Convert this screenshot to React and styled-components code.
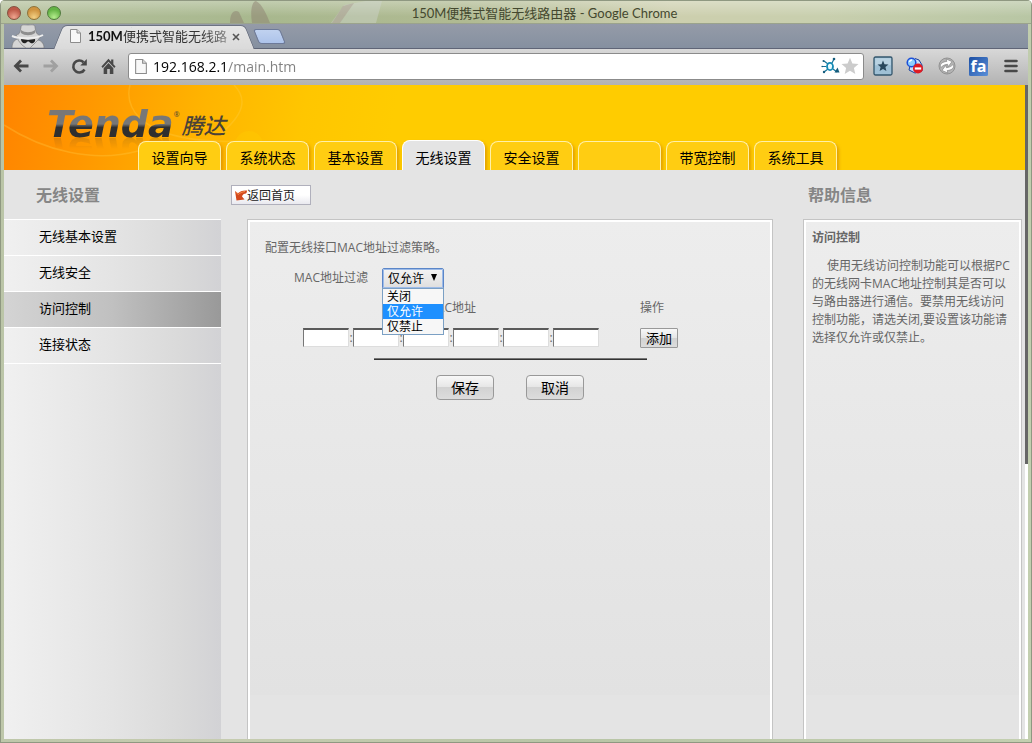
import React, { useState } from 'react';

import styled, { createGlobalStyle, css } from 'styled-components';

const GlobalStyle = createGlobalStyle`
  * {
    box-sizing: border-box;
  }
  body {
    margin: 0;
    background: #fff;
    font-family: "Open Sans", "Noto Sans CJK SC", sans-serif;
    font-size: 12px;
    line-height: 18px;
    color: #666;
  }
  button, input, select {
    font-family: inherit;
    margin: 0;
  }
`;

/* ---------- window frame ---------- */

const Window = styled.div`
  display: flex;
  flex-direction: column;
  min-height: 100vh;
  padding: 0 3px 3px;
  border: 1px solid #8f9881;
  border-top: 0;
  border-radius: 5px 5px 0 0;
  overflow: hidden;
  background: linear-gradient(100deg, #b9c4a6 0%, #c6ccb0 30%, #b8c5a6 60%, #c3cfb0 100%);
`;

const TitleBar = styled.div`
  position: relative;
  display: flex;
  align-items: center;
  height: 24px;
  margin: 0 -3px;
  padding: 2px 3px 0;
  border-top: 1px solid #8f9881;
  border-bottom: 1px solid #9ba38c;
  background:
    linear-gradient(rgba(255, 255, 255, 0.3), rgba(255, 255, 255, 0) 70%),
    linear-gradient(90deg, #b4c09c, #a8b88e 25%, #b0ba92 45%, #cdcfae 65%, #c8cfae 80%, #b8c6a4);
`;

const Ears = styled.svg`
  position: absolute;
  left: 225px;
  top: 0;
`;

const Lights = styled.div`
  display: flex;
  gap: 6px;
  padding-left: 3px;
`;

const Light = styled.button`
  width: 14px;
  height: 14px;
  padding: 0;
  border: 1px solid ${props => props.$edge};
  border-radius: 50%;
  background: radial-gradient(circle at 50% 85%, ${props => props.$glow}, ${props => props.$color} 65%);
`;

const WindowTitle = styled.div`
  flex: 1;
  position: relative;
  text-align: center;
  font-family: Lato, "Noto Sans CJK SC", sans-serif;
  font-size: 13px;
  color: #44482f;
`;

/* ---------- browser chrome ---------- */

const TabStrip = styled.div`
  display: flex;
  align-items: flex-end;
  height: 25px;
  padding-left: 7px;
  border-bottom: 1px solid #5f6577;
  background: linear-gradient(#959ba8, #8590a0);
`;

const BrowserTab = styled.div`
  position: relative;
  z-index: 1;
  display: flex;
  align-items: center;
  width: 192px;
  height: 25px;
  margin: 0 6px -1px 13px;
  padding: 0 10px 2px 12px;

  &::before,
  &::after {
    content: '';
    position: absolute;
    z-index: -1;
    top: 1px;
    bottom: 0;
    border: 1px solid #6d7382;
    border-bottom: 0;
    background: linear-gradient(#e6e6e6, #dadada);
  }
  &::before {
    left: 0;
    right: 40%;
    border-right: 0;
    border-radius: 5px 0 0 0;
    transform: skewX(-22deg);
  }
  &::after {
    left: 40%;
    right: 0;
    border-left: 0;
    border-radius: 0 5px 0 0;
    transform: skewX(22deg);
  }
`;

const TabTitle = styled.span`
  flex: 1;
  padding-left: 7px;
  white-space: nowrap;
  font-family: Lato, "Noto Sans CJK SC", sans-serif;
  font-size: 13px;
  color: #333;
  mask-image: linear-gradient(90deg, #000 80%, rgba(0, 0, 0, 0.4));

  b {
    font-weight: bold;
    color: #111;
  }
`;

const TabClose = styled.button`
  display: flex;
  padding: 2px 0 0;
  border: 0;
  background: none;
`;

const NewTab = styled.button`
  width: 27px;
  height: 15px;
  margin-bottom: 4px;
  padding: 0;
  border: 1px solid #6d7a99;
  border-radius: 3px;
  background: linear-gradient(#c0d2f0, #adc3ea);
  transform: skewX(22deg);
`;

const Toolbar = styled.div`
  display: flex;
  align-items: center;
  height: 36px;
  padding: 0 3px 2px;
  background: linear-gradient(#d8d8d8, #b2b2b2);
`;

const ToolButton = styled.button`
  display: flex;
  justify-content: center;
  align-items: center;
  width: 29px;
  height: 24px;
  padding: 0;
  border: 0;
  background: none;
`;

const Omnibox = styled.div`
  flex: 1;
  display: flex;
  align-items: center;
  height: 27px;
  margin-left: 5px;
  padding: 0 4px 0 6px;
  border: 1px solid #8b8b8b;
  border-radius: 3px;
  background: #fff;
`;

const Address = styled.input`
  flex: 1;
  min-width: 0;
  padding: 0 0 0 6px;
  border: 0;
  outline: 0;
  font-size: 14px;
  color: transparent;
  background: linear-gradient(90deg, #000 80px, #808080 80px);
  background-clip: text;
`;

const Extensions = styled.div`
  display: flex;
  gap: 3px;
  padding-left: 4px;
`;

/* ---------- router page ---------- */

const Viewport = styled.div`
  flex: 1;
  display: flex;
`;

const ScrollTrack = styled.div`
  width: 3px;
  background: linear-gradient(#666 58%, #fff 58%);
`;

const Page = styled.div`
  flex: 1;
  display: flex;
  flex-direction: column;
  background: #e4e4e4;
`;

const Header = styled.header`
  position: relative;
  display: flex;
  flex-direction: column;
  justify-content: space-between;
  height: 85px;
  overflow: hidden;
  background: #fc0 linear-gradient(100deg, #ff8400, #ff9800 90px, #ffb400 200px, #ffc600 300px, #fc0 390px);
`;

const Swirls = styled.svg`
  position: absolute;
  left: 0;
  top: 0;
`;

const Brand = styled.div`
  position: relative;
  display: flex;
  align-items: flex-start;
  height: 50px;
  padding: 18px 0 0 43px;
  color: #4a4238;
`;

const BrandName = styled.span`
  font-family: "DejaVu Sans", sans-serif;
  font-size: 38px;
  line-height: 42px;
  font-weight: bold;
  font-style: italic;
  color: transparent;
  background: linear-gradient(#777 50%, #2f2f2f 58%);
  background-clip: text;
  -webkit-box-reflect: below -15px linear-gradient(transparent 55%, rgba(0, 0, 0, 0.25));
`;

const BrandMark = styled.span`
  padding: 8px 2px 0 0;
  font-size: 7px;
  line-height: 8px;
`;

const BrandLocal = styled.span`
  padding-top: 8px;
  font-size: 22px;
  line-height: 28px;
  font-weight: 500;
  font-style: italic;
`;

const MainNav = styled.nav`
  position: relative;
  display: flex;
  align-items: flex-end;
  gap: 5px;
  padding-left: 134px;
`;

const NavTab = styled.a`
  width: 83px;
  height: 29px;
  padding-top: 6px;
  border: 1px solid #fff0a8;
  border-bottom: 0;
  border-radius: 8px 8px 0 0;
  background: #ffcd12;
  box-shadow: 2px 2px 3px rgba(200, 120, 0, 0.5);
  text-align: center;
  text-decoration: none;
  font-size: 14px;
  line-height: 20px;
  color: #000;

  ${props => props.$active && css`
    height: 30px;
    padding-top: 7px;
    border-color: #fff;
    background: #e4e4e4;
  `}
`;

const Columns = styled.div`
  flex: 1;
  display: grid;
  grid-template-columns: 217px 1fr 222px;
`;

const Column = styled.section`
  display: flex;
  flex-direction: column;
`;

const Heading = styled.h2`
  height: 49px;
  margin: 0;
  padding: 13px 0 0 ${props => props.$indent}px;
  font-size: 16px;
  line-height: 24px;
  font-weight: 600;
  color: #868686;
`;

const SideMenu = styled.ul`
  flex: 1;
  margin: 0;
  padding: 0;
  list-style: none;
  border-top: 1px solid #fff;
  background: linear-gradient(90deg, #f0f0f0, #e4e4e4 50%, #dadada 80%, #d2d2d5);
`;

const SideLink = styled.a`
  display: block;
  height: 36px;
  padding: 6px 0 0 35px;
  border-bottom: 1px solid #fff;
  font-size: 13px;
  line-height: 20px;
  color: #000;
  text-decoration: none;
  background: ${props => props.$active ? 'linear-gradient(90deg, #d4d4d4, #c0c0c0 50%, #999)' : 'none'};
`;

const BackRow = styled.div`
  height: 49px;
  padding: 15px 0 0 10px;
`;

const BackButton = styled.button`
  display: flex;
  align-items: center;
  width: 80px;
  height: 20px;
  padding: 0 0 0 3px;
  border: 1px solid #b0b0bc;
  background: linear-gradient(#fff 50%, #e9e9ef);
  font-size: 12px;
  color: #222;
`;

const Panel = styled.div`
  flex: 1;
  margin: ${props => props.$help ? '0 3px 0 0' : '0 30px 0 26px'};
  padding: ${props => props.$help ? '7px 5px' : '19px 15px'};
  border: 1px solid #c4c4c4;
  border-bottom: 0;
  box-shadow: inset 2px 2px #fff, inset -2px 0 #fff;
  background: linear-gradient(#ededed, #e2e2e2 475px, #e4e4e4 475px);
`;

const Intro = styled.p`
  margin: 0;
  padding-left: 2px;
`;

const FilterRow = styled.div`
  display: flex;
  align-items: center;
  gap: 14px;
  height: 42px;
  padding-left: 31px;
`;

const SelectWrap = styled.div`
  position: relative;
`;

const Select = styled.select`
  display: block;
  width: 62px;
  height: 21px;
  padding: 0 0 0 5px;
  appearance: none;
  border: 1px solid #5b86c8;
  border-radius: 2px;
  outline: 1px solid #9dbbe8;
  outline-offset: -2px;
  background: linear-gradient(#f4f4f4, #dedede);
  font-size: 12px;
  color: #000;
`;

const Caret = styled.span`
  position: absolute;
  right: 7px;
  top: 6px;
  border: 3px solid transparent;
  border-top: 7px solid #000;
  border-bottom: 0;
  pointer-events: none;
`;

const Options = styled.ul`
  position: absolute;
  z-index: 2;
  top: 20px;
  left: 0;
  right: 0;
  margin: 0;
  padding: 0;
  list-style: none;
  border: 1px solid #7ba0c4;
  background: #f7f7f7;
`;

const Option = styled.li`
  height: 15px;
  padding-left: 4px;
  line-height: 15px;
  color: ${props => props.$selected ? '#fff' : '#000'};
  background: ${props => props.$selected ? '#1e90ff' : 'none'};
  cursor: default;
`;

const MacTable = styled.table`
  margin-left: 40px;
  border-collapse: collapse;

  th, td {
    padding: 0;
    font-weight: normal;
  }
  th {
    height: 18px;
  }
  td {
    height: 41px;
  }
  th:last-child, td:last-child {
    padding-left: 41px;
    text-align: left;
  }
`;

const MacFields = styled.div`
  display: flex;
  align-items: center;
`;

const MacField = styled.input`
  width: 46px;
  height: 19px;
  padding: 0 2px;
  border: 1px solid #ddd;
  border-top: 2px solid #5a5a5a;
  border-left: 1px solid #777;
  background: #fff;
  font-size: 12px;
`;

const Colon = styled.span`
  width: 4px;
  text-align: center;
`;

const PushButton = styled.button`
  width: ${props => props.$small ? 38 : 58}px;
  height: ${props => props.$small ? 20 : 25}px;
  padding: 0;
  border: 1px solid #999;
  border-radius: ${props => props.$small ? 1 : 4}px;
  background: linear-gradient(#f8f8f8, #e6e6e6 48%, #d2d2d2 50%, #dcdcdc);
  font-size: ${props => props.$small ? 13 : 14}px;
  line-height: 18px;
  color: #000;
`;

const Rule = styled.hr`
  width: 273px;
  height: 2px;
  margin: 0 auto 15px;
  border: 0;
  border-top: 1px solid #777;
  background: #333;
`;

const Actions = styled.div`
  display: flex;
  justify-content: center;
  gap: 32px;
`;

const HelpTitle = styled.h3`
  margin: 0 0 10px;
  padding: 2px 3px 0;
  font-size: 12px;
  line-height: 18px;
  font-weight: bold;
`;

const HelpText = styled.p`
  margin: 0;
  padding: 0 3px;
  text-indent: 15px;
`;

/* ---------- drawings ---------- */

const PageIcon = ({ size }) => (
  <svg width={size - 3} height={size} viewBox="0 0 11 14">
    <path d="M.5.5H7L10.500 4V13.500H.5Z" fill="#f8f8f8" stroke="#8c8c8c" />
    <path d="M7 .5V4H10.500" fill="#ddd" stroke="#8c8c8c" />
  </svg>
);

const Incognito = () => (
  <svg width="34" height="24" viewBox="0 0 34 24">
    <path d="M1 24C1 18 4 15 8 15L5 11C9 10 9 9 10 3C10 0 14 1 17 1S24 0 24 3C25 9 25 10 30 12L27 16C31 17 33 20 33 24Z" fill="#d5d5d5" stroke="#777" strokeWidth=".6" />
    <path d="M10 6C14 9 20 9 24 6L24 9C20 12 14 12 10 9Z" fill="#8e8e8e" />
    <path d="M1 12C8 15 25 15 32 11" fill="none" stroke="#efefef" strokeWidth="2" />
    <path d="M10 15L17 16L24 15C25 19 20 21 18 17.500H16.500C14 21 10 19 10 15Z" fill="#222" />
    <path d="M7 16L11 21L15 24M27 16L22 21L19 24" fill="none" stroke="#999" />
  </svg>
);

const Arrow = ({ color, flip }) => (
  <svg width="17" height="16" viewBox="0 0 17 16">
    <path d={flip ? 'M1.500 8H14M9 2.500L14.500 8L9 13.500' : 'M15.500 8H3M8 2.500L2.500 8L8 13.500'} fill="none" stroke={color} strokeWidth="2.800" />
  </svg>
);

const ReloadIcon = () => (
  <svg width="17" height="17" viewBox="0 0 17 17">
    <path d="M13.500 11.500A6 6 0 1 1 12.500 4.200" fill="none" stroke="#484848" strokeWidth="2.600" />
    <path d="M15.800 1V7.500H9.300Z" fill="#484848" />
  </svg>
);

const HomeIcon = () => (
  <svg width="15" height="17" viewBox="0 0 17 17" preserveAspectRatio="none">
    <path d="M8.500 .8L0.500 8.600L2 10L8.500 3.800L15 10L16.500 8.600L14 6.200V1.500H11.500V3.800Z" fill="#484848" />
    <path d="M3 10.200L8.500 5L14 10.200V16H10V11H7V16H3Z" fill="#484848" />
  </svg>
);

const StarIcon = () => (
  <svg width="18" height="18" viewBox="0 0 18 18">
    <path d="M9 .8L11.400 6.500L17.500 7L12.900 11L14.300 17L9 13.800L3.700 17L5.100 11L.5 7L6.600 6.500Z" fill="#ccc" />
  </svg>
);

const MoleculeIcon = () => (
  <svg width="20" height="18" viewBox="0 0 20 18">
    <path d="M3 4L7 7M11 6L13 2M7 12L3 15M1 9.500H5M12 12L16 15" stroke="#17749a" strokeWidth="1.200" />
    <ellipse cx="9" cy="9.500" rx="3" ry="3.600" fill="#e8fbff" stroke="#1389b4" strokeWidth="1.800" />
    <circle cx="2.500" cy="4" r="1" fill="#145c7c" />
    <circle cx="13" cy="2" r="1.300" fill="#145c7c" />
    <circle cx="3" cy="15" r="1.200" fill="#145c7c" />
    <circle cx="1.200" cy="9.500" r=".8" fill="#145c7c" />
    <path d="M13.500 15.500L16.500 10.500L18.500 15.500Z" fill="#145c7c" />
  </svg>
);

const BookmarkExt = () => (
  <svg width="20" height="20" viewBox="0 0 20 20">
    <rect x="1" y="1" width="18" height="18" rx="1.500" fill="#9fc0d5" stroke="#33566c" strokeWidth="1.300" />
    <rect x="2.200" y="2.200" width="15.600" height="7" fill="#b9d2e1" />
    <path d="M10 4.500L11.500 8.300L15.500 8.600L12.400 11.100L13.400 15L10 12.900L6.600 15L7.600 11.100L4.500 8.600L8.500 8.300Z" fill="#29475c" />
  </svg>
);

const BlockExt = () => (
  <svg width="18" height="18" viewBox="0 0 18 18">
    <path d="M9 1.500L13 3L16 8V14L9 16L3 13L4 9" fill="#c7defa" stroke="#1b3f9c" />
    <circle cx="5.500" cy="5.500" r="4.300" fill="#8fd0ff" stroke="#1d4fd8" strokeWidth="1.500" />
    <path d="M3.500 5A2.500 2.500 0 0 1 6 3" fill="none" stroke="#fff" strokeWidth="1.500" />
    <circle cx="12" cy="11.500" r="5" fill="#df1b22" />
    <rect x="8.800" y="10.400" width="6.400" height="2.200" fill="#fff" />
  </svg>
);

const SyncExt = () => (
  <svg width="18" height="18" viewBox="0 0 18 18">
    <circle cx="9" cy="9" r="8" fill="#b4b4b4" stroke="#929292" />
    <g transform="rotate(-15 9 9)">
      <path d="M2.500 9V8C3 4.500 6 4 10 4.500V2L15 6L10 10V7.500C7 7 5 7.500 2.500 9Z" fill="#fff" stroke="#808080" strokeWidth=".6" />
      <path d="M15.500 9V10C15 13.500 12 14 8 13.500V16L3 12L8 8V10.500C11 11 13 10.500 15.500 9Z" fill="#fff" stroke="#808080" strokeWidth=".6" />
    </g>
  </svg>
);

const FaExt = () => (
  <svg width="19" height="19" viewBox="0 0 19 19" overflow="visible">
    <defs>
      <linearGradient id="fa" x1="0" y1="0" x2="1" y2="1">
        <stop offset="0" stopColor="#1c4fa3" />
        <stop offset="1" stopColor="#5b8fd8" />
      </linearGradient>
    </defs>
    <rect width="19" height="19" rx="1.500" fill="url(#fa)" />
    <text x="9.500" y="15" textAnchor="middle" fontFamily="Open Sans, sans-serif" fontWeight="bold" fontSize="16" fill="#fff">fa</text>
  </svg>
);

const MenuIcon = () => (
  <svg width="14" height="14" viewBox="0 0 14 14">
    <path d="M1.500 2H12.500M1.500 7H12.500M1.500 12H12.500" stroke="#484848" strokeWidth="2.600" strokeLinecap="round" />
  </svg>
);

const BackIcon = () => (
  <svg width="12" height="11" viewBox="0 0 12 11">
    <path d="M0 1L3 3.200C5 1.200 8 0 12 .5C12 2 11.500 3 11 3.500C9 3.500 7.500 4.500 7 6.500L9.500 9.500L1.500 10.500Z" fill="#d4491c" />
    <path d="M1 2L3 4.500C5 3 7 2 10 1.500" fill="none" stroke="#f28a4c" />
  </svg>
);

const navTabs = ['设置向导', '系统状态', '基本设置', '无线设置', '安全设置', '', '带宽控制', '系统工具'];
const sideLinks = ['无线基本设置', '无线安全', '访问控制', '连接状态'];
const filterModes = ['关闭', '仅允许', '仅禁止'];

const BrowserChrome = () => (
  <>
    <TitleBar>
      <Ears width="260" height="22" viewBox="0 0 260 22">
        <path d="M4 22C4 12 8 8 13 11L18 22ZM26 22C24 10 26 0 30 0C36 3 40 12 44 22Z" fill="#8a7a6c" opacity=".45" />
        <path d="M105 22L118 4L140 0H156L150 22Z" fill="#d3d8d4" opacity=".4" />
        <path d="M106 22L117 5L128 2L114 22Z" fill="#9c7f78" opacity=".3" />
      </Ears>
      <Lights>
        <Light aria-label="Close" $color="#bd5a48" $glow="#efa58f" $edge="#84503f" />
        <Light aria-label="Minimize" $color="#cf9440" $glow="#f2d084" $edge="#8e7138" />
        <Light aria-label="Maximize" $color="#64b444" $glow="#b5ed8e" $edge="#4f7b3c" />
      </Lights>
      <WindowTitle>150M便携式智能无线路由器 - Google Chrome</WindowTitle>
    </TitleBar>
    <TabStrip>
      <Incognito />
      <BrowserTab>
        <PageIcon size={14} />
        <TabTitle><b>150M</b>便携式智能无线路</TabTitle>
        <TabClose aria-label="Close tab">
          <svg width="8" height="8" viewBox="0 0 8 8">
            <path d="M1 1L7 7M7 1L1 7" stroke="#555" strokeWidth="1.600" />
          </svg>
        </TabClose>
      </BrowserTab>
      <NewTab aria-label="New tab" />
    </TabStrip>
    <Toolbar>
      <ToolButton aria-label="Back"><Arrow color="#484848" /></ToolButton>
      <ToolButton aria-label="Forward"><Arrow color="#a0a0a0" flip /></ToolButton>
      <ToolButton aria-label="Reload"><ReloadIcon /></ToolButton>
      <ToolButton aria-label="Home"><HomeIcon /></ToolButton>
      <Omnibox>
        <PageIcon size={15} />
        <Address aria-label="Address" defaultValue="192.168.2.1/main.htm" />
        <MoleculeIcon />
        <StarIcon />
      </Omnibox>
      <Extensions>
        <ToolButton aria-label="Bookmarks"><BookmarkExt /></ToolButton>
        <ToolButton aria-label="Blocker"><BlockExt /></ToolButton>
        <ToolButton aria-label="Sync"><SyncExt /></ToolButton>
        <ToolButton aria-label="fa"><FaExt /></ToolButton>
        <ToolButton aria-label="Menu"><MenuIcon /></ToolButton>
      </Extensions>
    </Toolbar>
  </>
);

const FilterSelect = () => {
  const [mode, setMode] = useState('仅允许');
  const [open, setOpen] = useState(true);

  const toggle = e => {
    e.preventDefault();
    setOpen(!open);
  };

  const pick = item => {
    setMode(item);
    setOpen(false);
  };

  return (
    <SelectWrap>
      <Select id="filter" value={mode} onMouseDown={toggle} onChange={e => setMode(e.target.value)}>
        {filterModes.map(item => <option key={item}>{item}</option>)}
      </Select>
      <Caret />
      {open && (
        <Options role="listbox">
          {filterModes.map(item => (
            <Option
              key={item}
              role="option"
              aria-selected={item === mode}
              $selected={item === mode}
              onClick={() => pick(item)}
            >
              {item}
            </Option>
          ))}
        </Options>
      )}
    </SelectWrap>
  );
};

const App = () => (
  <>
    <GlobalStyle />
    <Window>
      <BrowserChrome />
      <Viewport>
        <Page>
          <Header>
            <Swirls width="400" height="85" viewBox="0 0 400 85">
              <path d="M126 0C118 30 150 60 240 56M230 0C244 14 240 30 215 50M0 40C40 66 90 78 134 66" fill="none" stroke="#ffd24a" strokeWidth="1.500" opacity=".3" />
              <circle cx="245" cy="60" r="14" fill="#ffd000" opacity=".3" />
            </Swirls>
            <Brand>
              <BrandName>Tenda</BrandName>
              <BrandMark>®</BrandMark>
              <BrandLocal>腾达</BrandLocal>
            </Brand>
            <MainNav>
              {navTabs.map((name, i) => (
                <NavTab key={i} href="#" $active={name === '无线设置'}>{name}</NavTab>
              ))}
            </MainNav>
          </Header>
          <Columns>
            <Column>
              <Heading $indent={32}>无线设置</Heading>
              <SideMenu>
                {sideLinks.map(name => (
                  <li key={name}>
                    <SideLink href="#" $active={name === '访问控制'}>{name}</SideLink>
                  </li>
                ))}
              </SideMenu>
            </Column>
            <Column>
              <BackRow>
                <BackButton><BackIcon />返回首页</BackButton>
              </BackRow>
              <Panel>
                <Intro>配置无线接口MAC地址过滤策略。</Intro>
                <FilterRow>
                  <label htmlFor="filter">MAC地址过滤</label>
                  <FilterSelect />
                </FilterRow>
                <MacTable>
                  <thead>
                    <tr>
                      <th>MAC地址</th>
                      <th>操作</th>
                    </tr>
                  </thead>
                  <tbody>
                    <tr>
                      <td>
                        <MacFields>
                          {[1, 2, 3, 4, 5, 6].map(n => (
                            <React.Fragment key={n}>
                              {n > 1 && <Colon>:</Colon>}
                              <MacField aria-label={`MAC ${n}`} maxLength={2} />
                            </React.Fragment>
                          ))}
                        </MacFields>
                      </td>
                      <td><PushButton $small>添加</PushButton></td>
                    </tr>
                  </tbody>
                </MacTable>
                <Rule />
                <Actions>
                  <PushButton>保存</PushButton>
                  <PushButton>取消</PushButton>
                </Actions>
              </Panel>
            </Column>
            <Column>
              <Heading $indent={5}>帮助信息</Heading>
              <Panel $help>
                <HelpTitle>访问控制</HelpTitle>
                <HelpText>
                  使用无线访问控制功能可以根据PC的无线网卡MAC地址控制其是否可以与路由器进行通信。要禁用无线访问控制功能，请选关闭,要设置该功能请选择仅允许或仅禁止。
                </HelpText>
              </Panel>
            </Column>
          </Columns>
        </Page>
        <ScrollTrack />
      </Viewport>
    </Window>
  </>
);

export default App;
